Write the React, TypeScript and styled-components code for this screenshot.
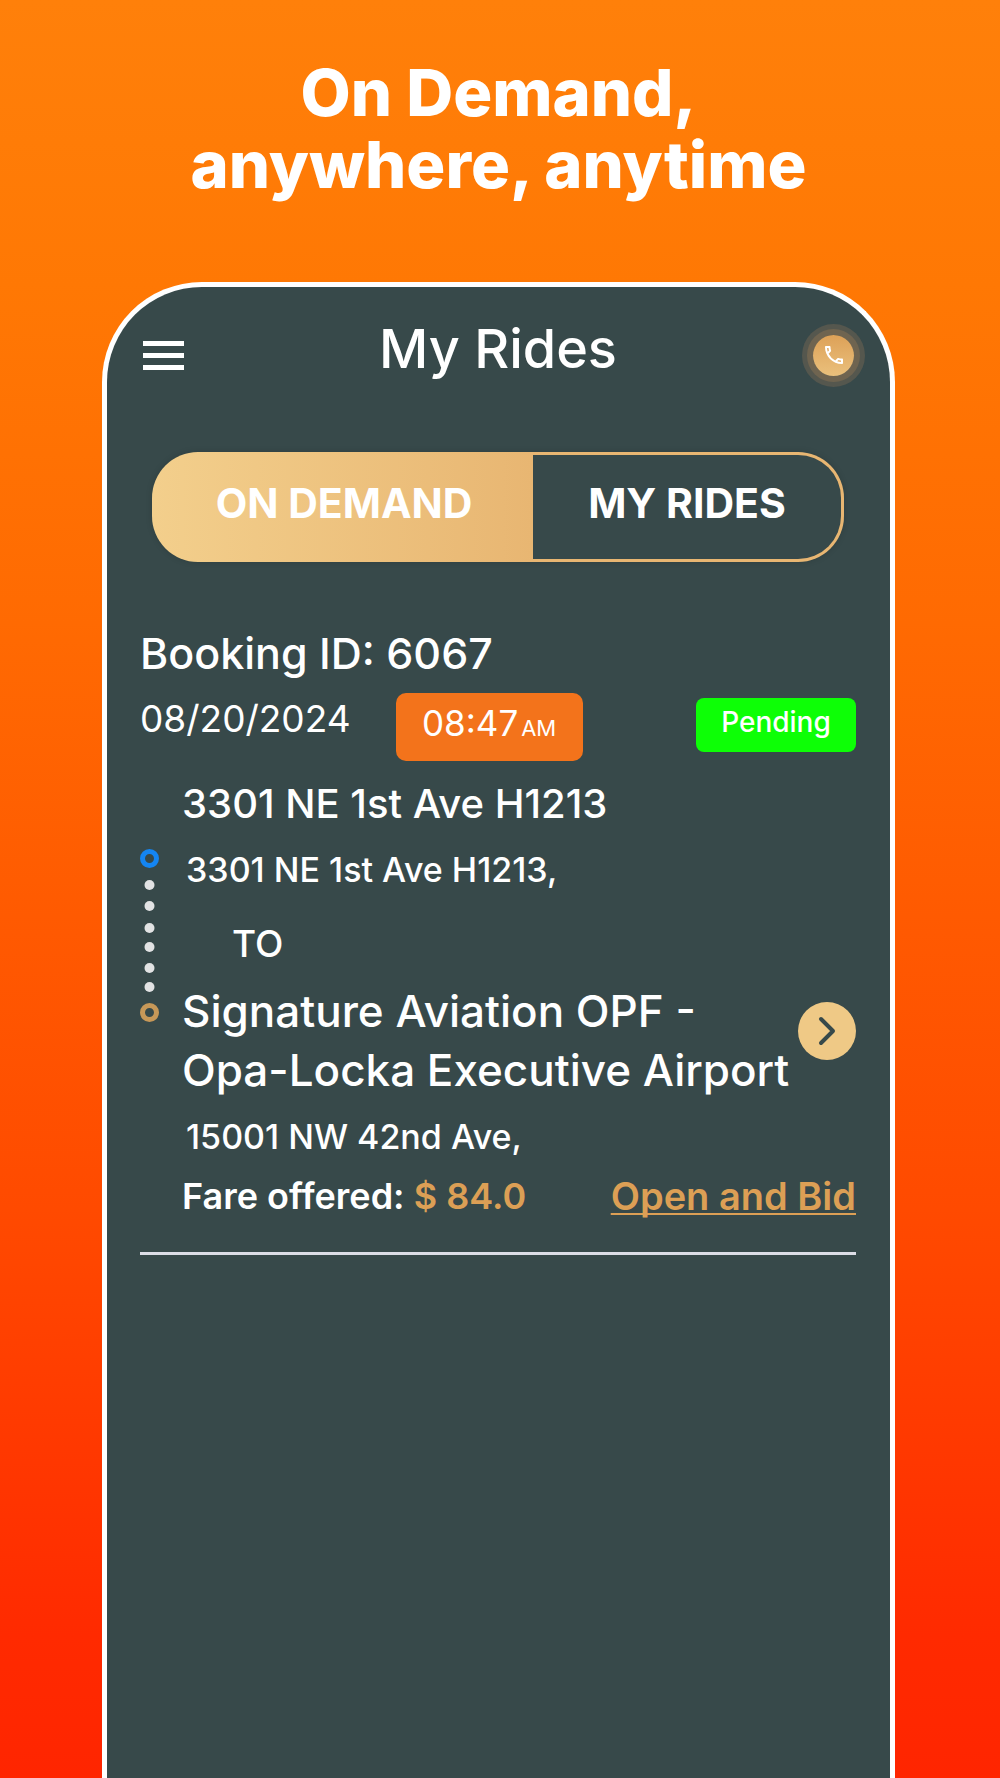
import React, { useState } from "react";
import styled, { createGlobalStyle } from "styled-components";
import { MdOutlineCall } from "react-icons/md";

const color = {
  panel: "#37494a",
  white: "#ffffff",
  gold: "#dc9f55",
  sand: "#efc986",
  sandDark: "#e8b672",
  orange: "#f3731b",
  green: "#0dff06",
};

const GlobalStyle = createGlobalStyle`
  * { box-sizing: border-box; }
  body {
    margin: 0;
    font-family: Inter, "Open Sans", sans-serif;
    color: ${color.white};
  }
  button {
    font: inherit;
    color: inherit;
    border: 0;
    padding: 0;
    background: none;
    cursor: pointer;
  }
  h1, h2, h3, p { margin: 0; }
`;

const Page = styled.div`
  min-height: 100vh;
  display: flex;
  flex-direction: column;
  padding: 57px 105px 0 102px;
  background: linear-gradient(#ff800a 0%, #ff7804 16%, #ff6a02 35%, #ff4a00 68%, #ff2a00 92%, #ff2500 100%);
`;

const Headline = styled.h1`
  font-size: 65px;
  line-height: 72px;
  font-weight: 800;
  text-align: center;
  margin-bottom: 81px;
`;

const Phone = styled.main`
  flex: 1;
  background: ${color.panel};
  border: 5px solid ${color.white};
  border-bottom: 0;
  border-radius: 100px 100px 0 0;
  padding: 32px 34px 0 33px;
`;

const TopBar = styled.header`
  display: grid;
  grid-template-columns: 64px 1fr 64px;
  align-items: center;
`;

const Title = styled.h2`
  font-size: 54px;
  line-height: 60px;
  font-weight: 500;
  text-align: center;
  padding-bottom: 12px;
`;

const MenuButton = styled.button`
  display: flex;
  flex-direction: column;
  gap: 7px;
  width: 47px;
  padding: 0 3px;
`;

const MenuBar = styled.span`
  height: 5px;
  background: ${color.white};
`;

const CallButton = styled.button`
  display: grid;
  place-items: center;
  justify-self: end;
  width: 41px;
  height: 41px;
  margin-right: 2px;
  border-radius: 50%;
  background: linear-gradient(#dda158, #eac07c);
  box-shadow: 0 0 0 6px #6f6450, 0 0 0 11px #55574e;
`;

const Tabs = styled.div`
  display: flex;
  height: 110px;
  margin: 61px 12px 0;
  border: 3px solid transparent;
  border-radius: 46px;
  overflow: hidden;
  background: linear-gradient(90deg, #f3cf8c, ${color.sandDark} 55%) border-box;
  box-shadow: 0 0 6px rgba(0, 0, 0, 0.15);
`;

const Tab = styled.button<{ $grow: number; $active: boolean }>`
  flex: ${(p) => p.$grow} 1 0;
  padding-bottom: 8px;
  font-size: 41px;
  font-weight: 700;
  background: ${(p) => (p.$active ? "transparent" : color.panel)};
`;

const Ride = styled.article`
  margin-top: 61px;
  padding-bottom: 31px;
  border-bottom: 3px solid #dcdde6;
`;

const BookingId = styled.h3`
  font-size: 43px;
  line-height: 60px;
  font-weight: 500;
`;

const Meta = styled.div`
  display: flex;
  align-items: flex-start;
  margin-top: 10px;
`;

const RideDate = styled.span`
  font-size: 37px;
  line-height: 52px;
  font-weight: 400;
`;

const Time = styled.span`
  display: flex;
  align-items: baseline;
  justify-content: center;
  gap: 3px;
  width: 187px;
  margin-left: 45px;
  padding: 4px 0 12px;
  border-radius: 10px;
  background: ${color.orange};
  font-size: 35px;
  line-height: 52px;
  font-weight: 400;
`;

const Meridiem = styled.small`
  font-size: 22px;
  line-height: 24px;
  font-weight: 400;
`;

const Status = styled.span`
  width: 160px;
  margin: 5px 0 0 auto;
  padding-bottom: 6px;
  border-radius: 8px;
  background: ${color.green};
  font-size: 28px;
  line-height: 48px;
  font-weight: 500;
  text-align: center;
`;

const Route = styled.div`
  display: grid;
  grid-template-columns: 19px 1fr;
  column-gap: 23px;
  margin-top: 13px;
`;

const Rail = styled.svg`
  margin-top: 75px;
`;

const PlaceName = styled.p<{ $size: number }>`
  flex: 1;
  font-size: ${(p) => p.$size}px;
  line-height: 59px;
  font-weight: 500;
`;

const KeepTogether = styled.span`
  white-space: nowrap;
`;

const Address = styled.p`
  margin-top: 12px;
  padding-left: 4px;
  font-size: 34px;
  line-height: 50px;
  font-weight: 500;
`;

const To = styled.p`
  margin: 24px 0 13px;
  padding-left: 50px;
  font-size: 37px;
  line-height: 50px;
  font-weight: 500;
`;

const Destination = styled.div`
  display: flex;
  align-items: flex-start;
`;

const OpenButton = styled.button`
  display: grid;
  place-items: center;
  width: 58px;
  height: 58px;
  margin-top: 20px;
  border-radius: 50%;
  background: ${color.sand};
`;

const Fare = styled.div`
  display: flex;
  justify-content: space-between;
  margin-top: 9px;
  font-size: 36px;
  line-height: 50px;
  font-weight: 600;
`;

const Price = styled.span`
  color: ${color.gold};
`;

const BidLink = styled.a`
  color: ${color.gold};
  font-size: 38px;
  text-decoration-thickness: 2px;
  text-underline-offset: 3px;
  text-decoration-skip-ink: none;
`;

const dots = [36, 57, 79, 98, 119, 138];
const tabs = [
  { id: "demand", label: "ON DEMAND", grow: 378 },
  { id: "rides", label: "MY RIDES", grow: 308 },
];

export default function App() {
  const [active, setActive] = useState("demand");
  return (
    <Page>
      <GlobalStyle />
      <Headline>
        On Demand,
        <br />
        anywhere, anytime
      </Headline>
      <Phone>
        <TopBar>
          <MenuButton aria-label="Menu">
            <MenuBar />
            <MenuBar />
            <MenuBar />
          </MenuButton>
          <Title>My Rides</Title>
          <CallButton aria-label="Call">
            <MdOutlineCall size={24} />
          </CallButton>
        </TopBar>
        <Tabs role="tablist">
          {tabs.map((t) => (
            <Tab
              key={t.id}
              role="tab"
              aria-selected={active === t.id}
              $grow={t.grow}
              $active={active === t.id}
              onClick={() => setActive(t.id)}
            >
              {t.label}
            </Tab>
          ))}
        </Tabs>
        <Ride>
          <BookingId>Booking ID: 6067</BookingId>
          <Meta>
            <RideDate>08/20/2024</RideDate>
            <Time>
              08:47<Meridiem>AM</Meridiem>
            </Time>
            <Status>Pending</Status>
          </Meta>
          <Route>
            <Rail width="19" height="173" viewBox="0 0 19 173" aria-hidden="true">
              <circle cx="9.5" cy="9.5" r="7" fill="none" stroke="#1485f2" strokeWidth="5" />
              {dots.map((y) => (
                <circle key={y} cx="9.5" cy={y} r="5" fill="#e2e3e4" />
              ))}
              <circle cx="9.5" cy="163.5" r="7" fill="none" stroke="#c79858" strokeWidth="5" />
            </Rail>
            <div>
              <PlaceName $size={40}>3301 NE 1st Ave H1213</PlaceName>
              <Address>3301 NE 1st Ave H1213,</Address>
              <To>TO</To>
              <Destination>
                <PlaceName $size={44}>
                  Signature Aviation OPF - <KeepTogether>Opa-Locka</KeepTogether> Executive Airport
                </PlaceName>
                <OpenButton aria-label="Open ride">
                  <svg width="18" height="30" viewBox="0 0 18 30" fill="none">
                    <path d="M3 3 L15 15 L3 27" stroke={color.panel} strokeWidth="4" strokeLinecap="round" strokeLinejoin="round" />
                  </svg>
                </OpenButton>
              </Destination>
              <Address>15001 NW 42nd Ave,</Address>
              <Fare>
                <span>
                  Fare offered: <Price>$ 84.0</Price>
                </span>
                <BidLink href="#bid">Open and Bid</BidLink>
              </Fare>
            </div>
          </Route>
        </Ride>
      </Phone>
    </Page>
  );
}
